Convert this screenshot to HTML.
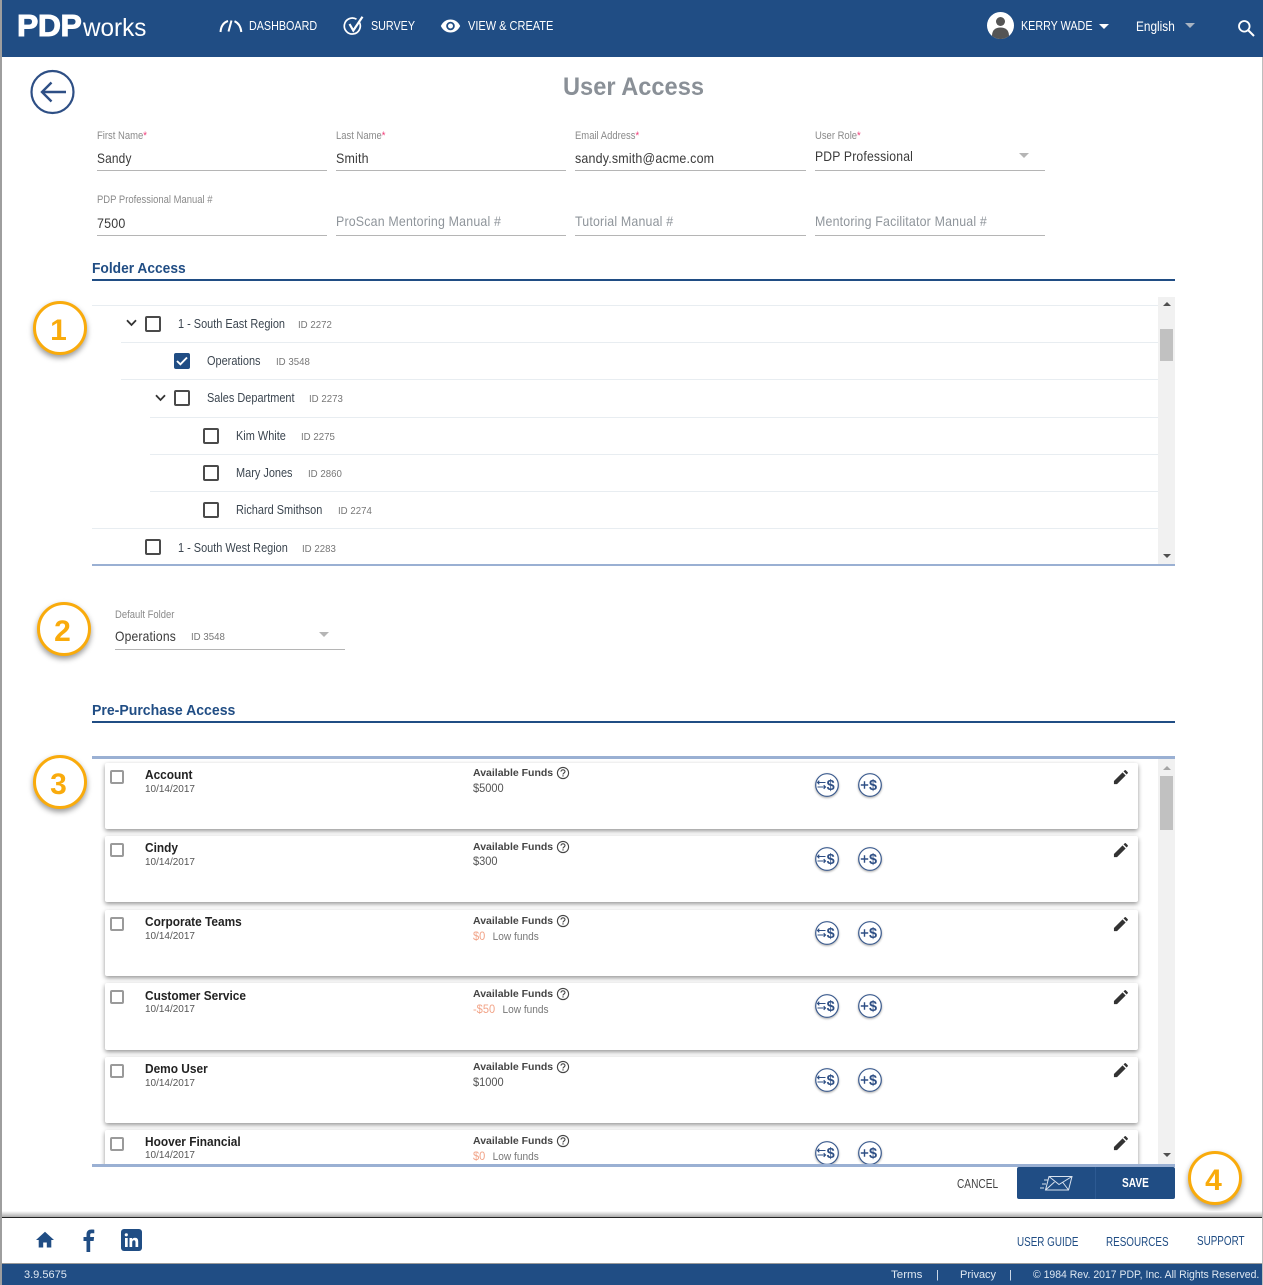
<!DOCTYPE html>
<html lang="en"><head><meta charset="utf-8"><title>User Access</title>
<style>
*{box-sizing:border-box}
html,body{margin:0;padding:0;background:#fff}
body{width:1263px;height:1285px;position:relative;overflow:hidden;font-family:"Liberation Sans",sans-serif;color:#333}
.a{position:absolute}
.t{position:absolute;white-space:nowrap;line-height:16px;height:16px;transform-origin:0 50%;transform:scaleX(.92)}
.nav{color:#fff;font-size:12.5px;top:18px;transform:scaleX(.86)}
.lab{font-size:11px;color:#8a8a8a;transform:scaleX(.86)}
.lab i{color:#f0407a;font-style:normal}
.val{font-size:14px;color:#3a3a3a;transform:scaleX(.89);letter-spacing:.2px}
.ph{font-size:14px;color:#8f959b;transform:scaleX(.885);letter-spacing:.2px}
.ln{position:absolute;height:1px;background:#b5b5b5;width:230px}
.h{font-size:14.5px;font-weight:bold;color:#204d84;transform:scaleX(.95)}
.bar{position:absolute;left:92px;width:1083px;height:2px;background:#204d84}
.row{position:absolute;height:1px;background:#e8edf1;right:105px}
.cb{position:absolute;width:16px;height:16px;border:2px solid #4a4a4a;border-radius:2px;background:#fff}
.nm{font-size:12.5px;color:#3c4650;transform:scaleX(.875)}
.id{font-size:10.5px;color:#777;transform:scaleX(.92)}
.circle{position:absolute;width:54px;height:54px;border:3px solid #f9ab0c;border-radius:50%;background:#fff;box-shadow:0 3px 6px rgba(0,0,0,.4);color:#f9ab0c;font-size:30px;font-weight:bold;text-align:center;line-height:54px;padding-right:3px}
.card{position:absolute;left:13px;width:1033px;height:67px;background:#fff;border-radius:2px;box-shadow:0 2px 5px rgba(0,0,0,.42)}
.ccb{position:absolute;left:5px;top:7px;width:14px;height:14px;border:2px solid #9a9a9a;border-radius:2px}
.cn{position:absolute;left:39.5px;top:4px;font-size:12.5px;font-weight:bold;color:#222;line-height:16px;white-space:nowrap;transform-origin:0 50%;transform:scaleX(.95)}
.cd{position:absolute;left:39.5px;top:19px;font-size:10.5px;color:#555;line-height:14px;white-space:nowrap;transform-origin:0 50%;transform:scaleX(.95)}
.af{position:absolute;left:368px;top:3px;font-size:10.5px;font-weight:bold;color:#444;line-height:14px;white-space:nowrap;transform-origin:0 50%;transform:scaleX(1)}
.fv{position:absolute;left:368px;top:18px;font-size:12px;color:#555;line-height:14px;white-space:nowrap;transform-origin:0 50%;transform:scaleX(.92)}
.low{color:#f2a488}.lf{color:#777;font-size:11px;margin-left:8px}
.ic{position:absolute}
.ds{filter:drop-shadow(0 1px 1px rgba(0,0,0,.35))}
.ft{font-size:12.5px;color:#204d84;top:1234px;transform:scaleX(.79)}
.fb{font-size:11px;color:#dfe8f2;top:1267px;transform:scaleX(1)}
</style></head><body>
<svg width="0" height="0" style="position:absolute"><defs>
<symbol id="pen" viewBox="0 0 16 16"><path d="M1 15v-3.300L10.200 2.500l3.300 3.300L4.300 15zM11.200 1.500 12.400.4a1 1 0 0 1 1.400 0l1.800 1.800a1 1 0 0 1 0 1.400l-1.100 1.200z" fill="#333"/></symbol>
<symbol id="q" viewBox="0 0 14 14"><circle cx="7" cy="7" r="5.600" fill="none" stroke="#444" stroke-width="1.100"/><path d="M5 5.600C5 4.400 5.900 3.800 7 3.800s2 .7 2 1.700c0 1.500-2 1.500-2 3" fill="none" stroke="#444" stroke-width="1.100"/><rect x="6.400" y="9.300" width="1.200" height="1.200" fill="#444"/></symbol>
</defs></svg>

<!-- side edges -->
<div class="a" style="left:0;top:0;width:2px;height:1285px;background:#9e9e9e;z-index:5"></div>
<div class="a" style="right:0;top:57px;width:1px;height:1228px;background:#bdbdbd;z-index:5"></div>

<!-- header -->
<div class="a" style="left:0;top:0;width:1263px;height:57px;background:#204d84"></div>
<div class="t" style="left:17px;top:12px;height:28px;line-height:28px;font-size:31px;font-weight:bold;color:#fff;transform:scaleX(1.030);letter-spacing:-.4px;-webkit-text-stroke:1px #fff">PDP</div>
<div class="t" style="left:83px;top:14px;height:28px;line-height:28px;font-size:25px;color:#fff;transform:scaleX(.97)">works</div>

<svg class="ic" style="left:219px;top:18px" width="24" height="16" viewBox="0 0 24 16"><path d="M1.500 14C2 8 5 4.300 9 3M12.500 2.500l-3 11" fill="none" stroke="#fff" stroke-width="2"/><path d="M15.500 3.200C19.500 5 21.800 9 22.300 14" fill="none" stroke="#fff" stroke-width="2"/></svg>
<div class="t nav" style="left:249px">DASHBOARD</div>
<svg class="ic" style="left:343px;top:15px" width="22" height="22" viewBox="0 0 22 22"><path d="M16.500 7.500A8 8 0 1 1 13.500 4.200" fill="none" stroke="#fff" stroke-width="1.700"/><path d="M6.500 9l3.800 6.500L19.500 1.800" fill="none" stroke="#fff" stroke-width="2.200"/></svg>
<div class="t nav" style="left:371px">SURVEY</div>
<svg class="ic" style="left:440px;top:18px" width="21" height="16" viewBox="0 0 21 16"><path d="M.8 8C3 3.700 6.500 1.500 10.500 1.500S18 3.700 20.200 8c-2.200 4.300-5.700 6.500-9.700 6.500S3 12.300.8 8z" fill="#fff"/><circle cx="10.500" cy="8" r="4.300" fill="#204d84"/><circle cx="10.500" cy="8" r="2.500" fill="#fff"/></svg>
<div class="t nav" style="left:468px;transform:scaleX(.88)">VIEW &amp; CREATE</div>

<svg class="ic" style="left:987px;top:12px" width="27" height="27" viewBox="0 0 27 27"><circle cx="13.500" cy="13.500" r="13.500" fill="#fff"/><circle cx="13.500" cy="9.500" r="4.500" fill="#555"/><path d="M5 24c0-6 3.500-8.500 8.500-8.500S22 18 22 24a13.500 13.500 0 0 1-17 0z" fill="#555"/></svg>
<div class="t nav" style="left:1021px">KERRY WADE</div>
<div class="a" style="left:1099px;top:24px;border:5px solid transparent;border-top:5px solid #fff;border-bottom:0"></div>
<div class="t" style="left:1136px;top:18px;font-size:14px;color:#fff;transform:scaleX(.845)">English</div>
<div class="a" style="left:1185px;top:23px;border:5px solid transparent;border-top:5px solid #a9b4c2;border-bottom:0"></div>
<svg class="ic" style="left:1237px;top:19px" width="18" height="18" viewBox="0 0 18 18"><circle cx="7.300" cy="7.300" r="5.300" fill="none" stroke="#fff" stroke-width="1.800"/><path d="M11 11l6 6" stroke="#fff" stroke-width="2"/></svg>

<!-- back + title -->
<svg class="ic" style="left:29px;top:69px" width="47" height="46" viewBox="0 0 47 46"><circle cx="23.500" cy="23" r="21" fill="#fff" stroke="#2e4f85" stroke-width="2.200"/><path d="M37 23H13M22.500 13.500 13 23l9.500 9.500" fill="none" stroke="#2e4f85" stroke-width="2.400"/></svg>
<div class="t" style="left:563px;top:73px;height:28px;line-height:28px;font-size:25px;font-weight:bold;color:#8a9097;transform:scaleX(.945)">User Access</div>

<!-- form -->
<div class="t lab" style="left:97px;top:128px">First Name<i>*</i></div>
<div class="t val" style="left:97px;top:150px;transform:scaleX(.85)">Sandy</div><div class="ln" style="left:97px;top:170px"></div>
<div class="t lab" style="left:336px;top:128px">Last Name<i>*</i></div>
<div class="t val" style="left:336px;top:150px">Smith</div><div class="ln" style="left:336px;top:170px"></div>
<div class="t lab" style="left:575px;top:128px">Email Address<i>*</i></div>
<div class="t val" style="left:575px;top:150px">sandy.smith@acme.com</div><div class="ln" style="left:575px;top:170px;width:231px"></div>
<div class="t lab" style="left:815px;top:128px">User Role<i>*</i></div>
<div class="t val" style="left:815px;top:148px;transform:scaleX(.87)">PDP Professional</div><div class="ln" style="left:815px;top:170px"></div>
<div class="a" style="left:1019px;top:153px;border:5px solid transparent;border-top:5px solid #b5b5b5;border-bottom:0"></div>

<div class="t lab" style="left:97px;top:192px">PDP Professional Manual #</div>
<div class="t val" style="left:97px;top:215px">7500</div><div class="ln" style="left:97px;top:235px"></div>
<div class="t ph" style="left:336px;top:213px">ProScan Mentoring Manual #</div><div class="ln" style="left:336px;top:235px"></div>
<div class="t ph" style="left:575px;top:213px">Tutorial Manual #</div><div class="ln" style="left:575px;top:235px;width:231px"></div>
<div class="t ph" style="left:815px;top:213px">Mentoring Facilitator Manual #</div><div class="ln" style="left:815px;top:235px"></div>

<!-- folder access -->
<div class="t h" style="left:92px;top:261px">Folder Access</div>
<div class="bar" style="top:279px"></div>
<div class="circle" style="left:33px;top:301px">1</div>

<div class="row" style="left:92px;top:305px"></div>
<div class="row" style="left:121px;top:342px"></div>
<div class="row" style="left:121px;top:379px"></div>
<div class="row" style="left:150px;top:417px"></div>
<div class="row" style="left:150px;top:454px"></div>
<div class="row" style="left:150px;top:491px"></div>
<div class="row" style="left:92px;top:528px"></div>

<svg class="ic" style="left:126px;top:319px" width="11" height="8" viewBox="0 0 11 8"><path d="M1 1.300l4.500 4.700L10 1.300" fill="none" stroke="#333" stroke-width="1.800"/></svg>
<div class="cb" style="left:145px;top:316px"></div>
<div class="t nm" style="left:178px;top:316px">1 - South East Region</div><div class="t id" style="left:298px;top:316.500px">ID 2272</div>

<div class="a" style="left:174px;top:353px;width:16px;height:16px;background:#204d84;border-radius:2px"></div>
<svg class="ic" style="left:174px;top:353px" width="16" height="16" viewBox="0 0 16 16"><path d="M3 8l3.400 3.300L13 4.500" fill="none" stroke="#fff" stroke-width="1.900"/></svg>
<div class="t nm" style="left:207px;top:353px">Operations</div><div class="t id" style="left:276px;top:353.500px">ID 3548</div>

<svg class="ic" style="left:155px;top:394px" width="11" height="8" viewBox="0 0 11 8"><path d="M1 1.300l4.500 4.700L10 1.300" fill="none" stroke="#333" stroke-width="1.800"/></svg>
<div class="cb" style="left:174px;top:390px"></div>
<div class="t nm" style="left:207px;top:390px">Sales Department</div><div class="t id" style="left:309px;top:390.500px">ID 2273</div>

<div class="cb" style="left:203px;top:427.500px"></div>
<div class="t nm" style="left:236px;top:428px">Kim White</div><div class="t id" style="left:301px;top:428.500px">ID 2275</div>
<div class="cb" style="left:203px;top:464.500px"></div>
<div class="t nm" style="left:236px;top:465px">Mary Jones</div><div class="t id" style="left:308px;top:465.500px">ID 2860</div>
<div class="cb" style="left:203px;top:501.500px"></div>
<div class="t nm" style="left:236px;top:502px">Richard Smithson</div><div class="t id" style="left:338px;top:502.500px">ID 2274</div>
<div class="cb" style="left:145px;top:539px"></div>
<div class="t nm" style="left:178px;top:540px">1 - South West Region</div><div class="t id" style="left:302px;top:540.500px">ID 2283</div>

<div class="a" style="left:1158px;top:297px;width:17px;height:268px;background:#f1f1f1"></div>
<div class="a" style="left:1160px;top:329px;width:13px;height:32px;background:#c1c1c1"></div>
<div class="a" style="left:1163px;top:302px;border:4px solid transparent;border-bottom:4px solid #505050;border-top:0"></div>
<div class="a" style="left:1163px;top:554px;border:4px solid transparent;border-top:4px solid #505050;border-bottom:0"></div>
<div class="a" style="left:92px;top:564px;width:1083px;height:2px;background:#9ab0d3"></div>

<!-- default folder -->
<div class="circle" style="left:37px;top:602px">2</div>
<div class="t lab" style="left:115px;top:607px">Default Folder</div>
<div class="t val" style="left:115px;top:628px;transform:scaleX(.865)">Operations</div>
<div class="t id" style="left:191px;top:629px">ID 3548</div>
<div class="ln" style="left:115px;top:649px"></div>
<div class="a" style="left:319px;top:632px;border:5px solid transparent;border-top:5px solid #b5b5b5;border-bottom:0"></div>

<!-- pre-purchase -->
<div class="t h" style="left:92px;top:703px;transform:scaleX(.97)">Pre-Purchase Access</div>
<div class="bar" style="top:721px"></div>
<div class="circle" style="left:33px;top:755px">3</div>

<div class="a" style="left:92px;top:756px;width:1083px;height:3px;background:#9ab0d3"></div>
<div class="a" style="left:92px;top:759px;width:1066px;height:405px;overflow:hidden">

<div class="card" style="top:4px;height:66px">
<div class="ccb"></div><div class="cn">Account</div><div class="cd">10/14/2017</div>
<div class="af">Available Funds</div><svg class="ic" style="left:451px;top:3px" width="14" height="14"><use href="#q"/></svg><div class="fv">$5000</div>
<svg class="ic ds" style="left:709px;top:9px" width="26" height="26" viewBox="0 0 26 26"><circle cx="13" cy="13" r="11.300" fill="#fff" stroke="#3b5b8f" stroke-width="1.200"/><path d="M3.500 10.500h8M5.300 8.700l-1.800 1.800 1.800 1.800M3.500 15h8M9.700 13.200l1.800 1.800-1.800 1.800" fill="none" stroke="#2e4f85" stroke-width="1.100"/><text x="12.600" y="18" font-size="14.500" font-weight="bold" fill="#2e4f85" font-family="Liberation Sans">$</text></svg>
<svg class="ic ds" style="left:752px;top:9px" width="26" height="26" viewBox="0 0 26 26"><circle cx="13" cy="13" r="11.300" fill="#fff" stroke="#3b5b8f" stroke-width="1.200"/><path d="M3.800 13h7.400M7.500 9.300v7.400" stroke="#2e4f85" stroke-width="1.400"/><text x="12" y="18" font-size="14.500" font-weight="bold" fill="#2e4f85" font-family="Liberation Sans">$</text></svg>
<svg class="ic" style="left:1008px;top:7px" width="15" height="15"><use href="#pen"/></svg>
</div>

<div class="card" style="top:77px;height:66px">
<div class="ccb"></div><div class="cn">Cindy</div><div class="cd">10/14/2017</div>
<div class="af" style="top:4px">Available Funds</div><svg class="ic" style="left:451px;top:4px" width="14" height="14"><use href="#q"/></svg><div class="fv" style="top:18px">$300</div>
<svg class="ic ds" style="left:709px;top:10px" width="26" height="26" viewBox="0 0 26 26"><circle cx="13" cy="13" r="11.300" fill="#fff" stroke="#3b5b8f" stroke-width="1.200"/><path d="M3.500 10.500h8M5.300 8.700l-1.800 1.800 1.800 1.800M3.500 15h8M9.700 13.200l1.800 1.800-1.800 1.800" fill="none" stroke="#2e4f85" stroke-width="1.100"/><text x="12.600" y="18" font-size="14.500" font-weight="bold" fill="#2e4f85" font-family="Liberation Sans">$</text></svg>
<svg class="ic ds" style="left:752px;top:10px" width="26" height="26" viewBox="0 0 26 26"><circle cx="13" cy="13" r="11.300" fill="#fff" stroke="#3b5b8f" stroke-width="1.200"/><path d="M3.800 13h7.400M7.500 9.300v7.400" stroke="#2e4f85" stroke-width="1.400"/><text x="12" y="18" font-size="14.500" font-weight="bold" fill="#2e4f85" font-family="Liberation Sans">$</text></svg>
<svg class="ic" style="left:1008px;top:7px" width="15" height="15"><use href="#pen"/></svg>
</div>

<div class="card" style="top:151px;height:66px">
<div class="ccb"></div><div class="cn">Corporate Teams</div><div class="cd">10/14/2017</div>
<div class="af" style="top:3.500px">Available Funds</div><svg class="ic" style="left:451px;top:4px" width="14" height="14"><use href="#q"/></svg><div class="fv" style="top:19px"><span class="low">$0</span><span class="lf">Low funds</span></div>
<svg class="ic ds" style="left:709px;top:10px" width="26" height="26" viewBox="0 0 26 26"><circle cx="13" cy="13" r="11.300" fill="#fff" stroke="#3b5b8f" stroke-width="1.200"/><path d="M3.500 10.500h8M5.300 8.700l-1.800 1.800 1.800 1.800M3.500 15h8M9.700 13.200l1.800 1.800-1.800 1.800" fill="none" stroke="#2e4f85" stroke-width="1.100"/><text x="12.600" y="18" font-size="14.500" font-weight="bold" fill="#2e4f85" font-family="Liberation Sans">$</text></svg>
<svg class="ic ds" style="left:752px;top:10px" width="26" height="26" viewBox="0 0 26 26"><circle cx="13" cy="13" r="11.300" fill="#fff" stroke="#3b5b8f" stroke-width="1.200"/><path d="M3.800 13h7.400M7.500 9.300v7.400" stroke="#2e4f85" stroke-width="1.400"/><text x="12" y="18" font-size="14.500" font-weight="bold" fill="#2e4f85" font-family="Liberation Sans">$</text></svg>
<svg class="ic" style="left:1008px;top:7px" width="15" height="15"><use href="#pen"/></svg>
</div>

<div class="card" style="top:224px">
<div class="ccb"></div><div class="cn" style="top:5px">Customer Service</div><div class="cd">10/14/2017</div>
<div class="af" style="top:4px">Available Funds</div><svg class="ic" style="left:451px;top:4px" width="14" height="14"><use href="#q"/></svg><div class="fv" style="top:19px"><span class="low">-$50</span><span class="lf">Low funds</span></div>
<svg class="ic ds" style="left:709px;top:10px" width="26" height="26" viewBox="0 0 26 26"><circle cx="13" cy="13" r="11.300" fill="#fff" stroke="#3b5b8f" stroke-width="1.200"/><path d="M3.500 10.500h8M5.300 8.700l-1.800 1.800 1.800 1.800M3.500 15h8M9.700 13.200l1.800 1.800-1.800 1.800" fill="none" stroke="#2e4f85" stroke-width="1.100"/><text x="12.600" y="18" font-size="14.500" font-weight="bold" fill="#2e4f85" font-family="Liberation Sans">$</text></svg>
<svg class="ic ds" style="left:752px;top:10px" width="26" height="26" viewBox="0 0 26 26"><circle cx="13" cy="13" r="11.300" fill="#fff" stroke="#3b5b8f" stroke-width="1.200"/><path d="M3.800 13h7.400M7.500 9.300v7.400" stroke="#2e4f85" stroke-width="1.400"/><text x="12" y="18" font-size="14.500" font-weight="bold" fill="#2e4f85" font-family="Liberation Sans">$</text></svg>
<svg class="ic" style="left:1008px;top:7px" width="15" height="15"><use href="#pen"/></svg>
</div>

<div class="card" style="top:298px;height:66px">
<div class="ccb"></div><div class="cn">Demo User</div><div class="cd">10/14/2017</div>
<div class="af">Available Funds</div><svg class="ic" style="left:451px;top:3px" width="14" height="14"><use href="#q"/></svg><div class="fv" style="top:18px">$1000</div>
<svg class="ic ds" style="left:709px;top:10px" width="26" height="26" viewBox="0 0 26 26"><circle cx="13" cy="13" r="11.300" fill="#fff" stroke="#3b5b8f" stroke-width="1.200"/><path d="M3.500 10.500h8M5.300 8.700l-1.800 1.800 1.800 1.800M3.500 15h8M9.700 13.200l1.800 1.800-1.800 1.800" fill="none" stroke="#2e4f85" stroke-width="1.100"/><text x="12.600" y="18" font-size="14.500" font-weight="bold" fill="#2e4f85" font-family="Liberation Sans">$</text></svg>
<svg class="ic ds" style="left:752px;top:10px" width="26" height="26" viewBox="0 0 26 26"><circle cx="13" cy="13" r="11.300" fill="#fff" stroke="#3b5b8f" stroke-width="1.200"/><path d="M3.800 13h7.400M7.500 9.300v7.400" stroke="#2e4f85" stroke-width="1.400"/><text x="12" y="18" font-size="14.500" font-weight="bold" fill="#2e4f85" font-family="Liberation Sans">$</text></svg>
<svg class="ic" style="left:1008px;top:6px" width="15" height="15"><use href="#pen"/></svg>
</div>

<div class="card" style="top:371px">
<div class="ccb"></div><div class="cn" style="top:4px">Hoover Financial</div><div class="cd" style="top:18px">10/14/2017</div>
<div class="af" style="top:3.500px">Available Funds</div><svg class="ic" style="left:451px;top:4px" width="14" height="14"><use href="#q"/></svg><div class="fv" style="top:19px"><span class="low">$0</span><span class="lf">Low funds</span></div>
<svg class="ic ds" style="left:709px;top:10px" width="26" height="26" viewBox="0 0 26 26"><circle cx="13" cy="13" r="11.300" fill="#fff" stroke="#3b5b8f" stroke-width="1.200"/><path d="M3.500 10.500h8M5.300 8.700l-1.800 1.800 1.800 1.800M3.500 15h8M9.700 13.200l1.800 1.800-1.800 1.800" fill="none" stroke="#2e4f85" stroke-width="1.100"/><text x="12.600" y="18" font-size="14.500" font-weight="bold" fill="#2e4f85" font-family="Liberation Sans">$</text></svg>
<svg class="ic ds" style="left:752px;top:10px" width="26" height="26" viewBox="0 0 26 26"><circle cx="13" cy="13" r="11.300" fill="#fff" stroke="#3b5b8f" stroke-width="1.200"/><path d="M3.800 13h7.400M7.500 9.300v7.400" stroke="#2e4f85" stroke-width="1.400"/><text x="12" y="18" font-size="14.500" font-weight="bold" fill="#2e4f85" font-family="Liberation Sans">$</text></svg>
<svg class="ic" style="left:1008px;top:6px" width="15" height="15"><use href="#pen"/></svg>
</div>
</div>

<div class="a" style="left:1158px;top:759px;width:17px;height:405px;background:#f1f1f1"></div>
<div class="a" style="left:1160px;top:776px;width:13px;height:54px;background:#c1c1c1"></div>
<div class="a" style="left:1163px;top:766px;border:4px solid transparent;border-bottom:4px solid #a5a5a5;border-top:0"></div>
<div class="a" style="left:1163px;top:1153px;border:4px solid transparent;border-top:4px solid #505050;border-bottom:0"></div>
<div class="a" style="left:92px;top:1164px;width:1083px;height:3px;background:#9ab0d3"></div>

<!-- actions -->
<div class="t" style="left:957px;top:1176px;font-size:12.5px;color:#444;transform:scaleX(.81)">CANCEL</div>
<div class="a" style="left:1017px;top:1167px;width:158px;height:32px;background:#204d84;border-radius:2px"></div>
<div class="a" style="left:1095px;top:1167px;width:1px;height:32px;background:#2d5a92"></div>
<svg class="ic" style="left:1040px;top:1175px" width="33" height="17" viewBox="0 0 33 17"><path d="M9 1.500h23l-3.500 13.500H5.500zM9 1.500l10 8 13-8M5.500 15l9-8M28.500 15l-6-8M4 5h4M2 9h4M0 13h4" fill="none" stroke="#d9e2ee" stroke-width="1"/></svg>
<div class="t" style="left:1122px;top:1175px;font-size:12.5px;font-weight:bold;color:#fff;transform:scaleX(.81)">SAVE</div>
<div class="circle" style="left:1188px;top:1151px">4</div>

<!-- footer -->
<div class="a" style="left:0;top:1211px;width:1263px;height:6px;background:linear-gradient(#fff,#aaa)"></div>
<div class="a" style="left:0;top:1217px;width:1263px;height:1px;background:#222"></div>
<svg class="ic" style="left:36px;top:1231px" width="18" height="17" viewBox="0 0 18 17"><path d="M9 .8 0 9h2.700v7.500h4.500v-5h3.600v5h4.500V9H18z" fill="#204d84"/></svg>
<svg class="ic" style="left:83px;top:1229px" width="12" height="23" viewBox="0 0 12 23"><path d="M3.500 23V12H.5V8h3V5.500C3.500 2 5.500.5 8.500.5c1.300 0 2.300.1 2.800.2v3.500H9c-1.500 0-1.800.7-1.800 1.800V8h3.900l-.5 4H7.200v11z" fill="#204d84"/></svg>
<div class="a" style="left:121px;top:1229px;width:21px;height:22px;background:#204d84;border-radius:3px"></div>
<svg class="ic" style="left:121px;top:1229px" width="21" height="22" viewBox="0 0 21 22"><path d="M4 9h2.700v9H4zM8.500 9h2.600v1.300c.6-1 1.700-1.500 2.900-1.500 2.500 0 3.200 1.600 3.200 4V18h-2.700v-4.600c0-1.300-.4-2.200-1.500-2.200-1.200 0-1.800.9-1.800 2.200V18H8.500z" fill="#fff"/><circle cx="5.300" cy="5.800" r="1.600" fill="#fff"/></svg>
<div class="t ft" style="left:1017px">USER GUIDE</div>
<div class="t ft" style="left:1106px">RESOURCES</div>
<div class="t ft" style="left:1197px;top:1233px">SUPPORT</div>

<div class="a" style="left:0;top:1263px;width:1263px;height:22px;background:#204d84;border-top:1px solid #9a9a9a"></div>
<div class="t fb" style="left:24px">3.9.5675</div>
<div class="t fb" style="left:891px;transform:scaleX(1.050)">Terms</div>
<div class="t fb" style="left:936px">|</div>
<div class="t fb" style="left:960px">Privacy</div>
<div class="t fb" style="left:1009px">|</div>
<div class="t fb" style="left:1033px;transform:scaleX(.95)">© 1984 Rev. 2017 PDP, Inc. All Rights Reserved.</div>
</body></html>
